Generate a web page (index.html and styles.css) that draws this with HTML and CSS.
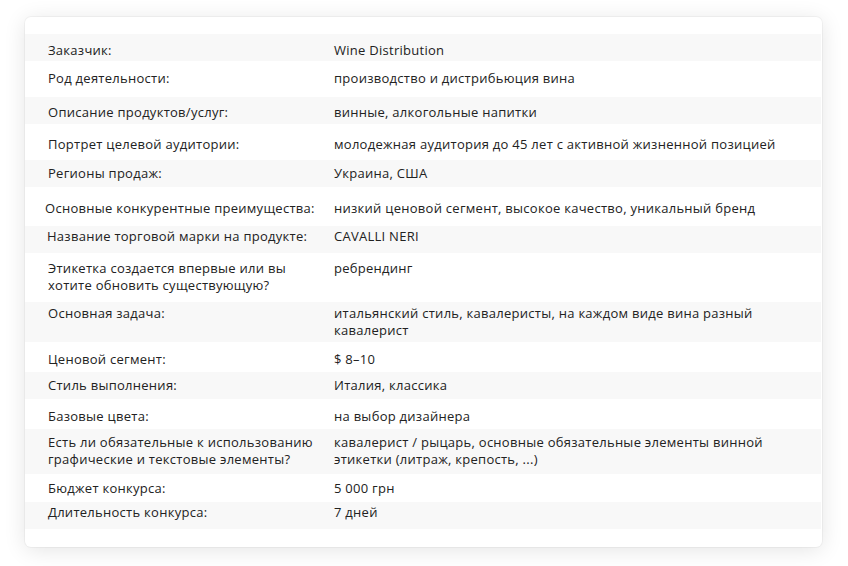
FILE: index.html
```html
<!DOCTYPE html>
<html lang="ru">
<head>
<meta charset="utf-8">
<title>Бриф</title>
<link rel="stylesheet" href="styles.css">
</head>
<body>
<div class="card">
  <div class="rows">
    <div class="row"><div class="label">Заказчик:</div><div class="value">Wine Distribution</div></div>
    <div class="row"><div class="label">Род деятельности:</div><div class="value">производство и дистрибьюция вина</div></div>
    <div class="row"><div class="label">Описание продуктов/услуг:</div><div class="value">винные, алкогольные напитки</div></div>
    <div class="row"><div class="label">Портрет целевой аудитории:</div><div class="value">молодежная аудитория до 45 лет с активной жизненной позицией</div></div>
    <div class="row"><div class="label">Регионы продаж:</div><div class="value">Украина, США</div></div>
    <div class="row"><div class="label">Основные конкурентные преимущества:</div><div class="value">низкий ценовой сегмент, высокое качество, уникальный бренд</div></div>
    <div class="row"><div class="label">Название торговой марки на продукте:</div><div class="value">CAVALLI NERI</div></div>
    <div class="row"><div class="label">Этикетка создается впервые или вы хотите обновить существующую?</div><div class="value">ребрендинг</div></div>
    <div class="row"><div class="label">Основная задача:</div><div class="value">итальянский стиль, кавалеристы, на каждом виде вина разный кавалерист</div></div>
    <div class="row"><div class="label">Ценовой сегмент:</div><div class="value">$ 8–10</div></div>
    <div class="row"><div class="label">Стиль выполнения:</div><div class="value">Италия, классика</div></div>
    <div class="row"><div class="label">Базовые цвета:</div><div class="value">на выбор дизайнера</div></div>
    <div class="row"><div class="label">Есть ли обязательные к использованию графические и текстовые элементы?</div><div class="value">кавалерист / рыцарь, основные обязательные элементы винной этикетки (литраж, крепость, ...)</div></div>
    <div class="row"><div class="label">Бюджет конкурса:</div><div class="value">5 000 грн</div></div>
    <div class="row"><div class="label">Длительность конкурса:</div><div class="value">7 дней</div></div>
  </div>
</div>
</body>
</html>
```

FILE: styles.css
```css
html, body {
  margin: 0;
  padding: 0;
  background: #ffffff;
}

body {
  padding: 17px 26px 19px 25px;
  font-family: "Open Sans", "Noto Sans", sans-serif;
  font-size: 13px;
  line-height: 17px;
  letter-spacing: 0.27px;
  color: #222222;
}

.card {
  background: #ffffff;
  border-radius: 6px;
  box-shadow: 0 0 0 1px rgba(0, 0, 0, 0.035), 0 3px 22px rgba(0, 0, 0, 0.11);
  padding: 17px 1px 18px 0;
}

.rows {
  display: flex;
  flex-direction: column;
}

.row {
  display: grid;
  grid-template-columns: 286px 1fr;
  box-sizing: border-box;
  padding-left: 23px;
  padding-right: 36px;
}

.row:nth-child(odd) {
  background: #f8f8f8;
}

.label {
  padding-right: 16px;
}

.row:nth-child(1)  { height: 27px; padding-top: 7.5px; }
.row:nth-child(2)  { height: 36px; padding-top: 8.5px; }
.row:nth-child(3)  { height: 27px; padding-top: 6.5px; }
.row:nth-child(4)  { height: 36px; padding-top: 11.5px; }
.row:nth-child(5)  { height: 27px; padding-top: 4.5px; }
.row:nth-child(6)  { height: 39px; padding-top: 12.5px; }
.row:nth-child(7)  { height: 27px; padding-top: 1.5px; }
.row:nth-child(8)  { height: 49px; padding-top: 6.5px; }
.row:nth-child(9)  { height: 40px; padding-top: 2.5px; }
.row:nth-child(10) { height: 30px; padding-top: 8.5px; }
.row:nth-child(11) { height: 27px; padding-top: 4.5px; }
.row:nth-child(12) { height: 30px; padding-top: 8.5px; }
.row:nth-child(13) { height: 45px; padding-top: 4.5px; }
.row:nth-child(14) { height: 28px; padding-top: 5.5px; }
.row:nth-child(15) { height: 27px; padding-top: 1.5px; }

.row:nth-child(6) .label { margin-left: -3px; }
.row:nth-child(7) .label { margin-left: -1px; }
```
